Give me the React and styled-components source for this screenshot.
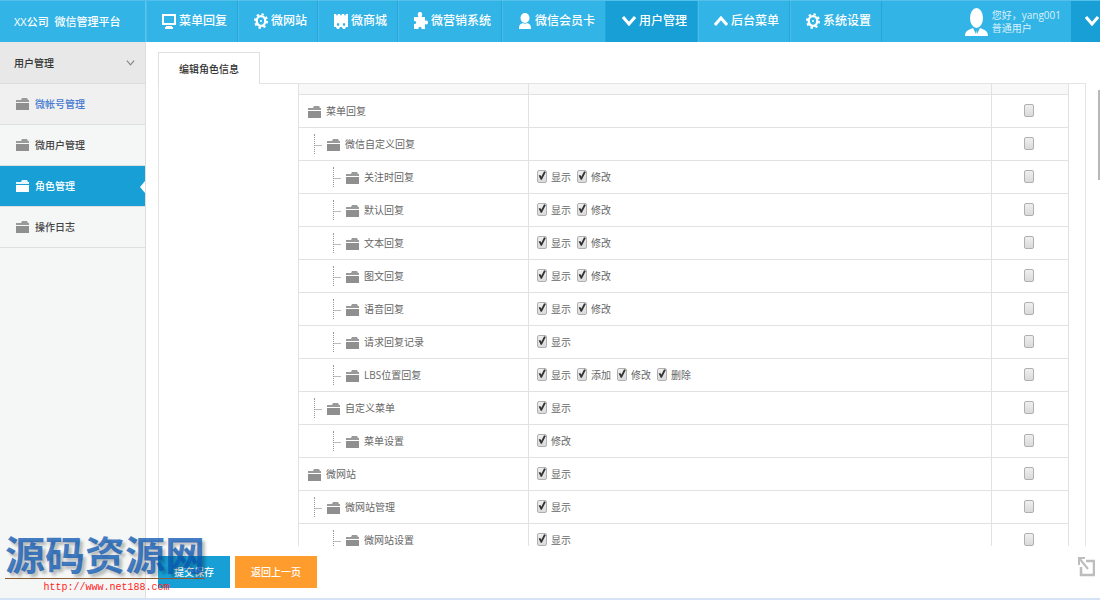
import React from 'react';
import styled, { createGlobalStyle, css } from 'styled-components';

const GlobalStyle = createGlobalStyle`
  * { box-sizing: border-box; }
  body {
    margin: 0;
    background: #fff;
    color: #666;
    font: 10px/14px "Open Sans", "Noto Sans CJK SC", sans-serif;
  }
  a { color: inherit; text-decoration: none; }
  button { font: inherit; border: 0; cursor: pointer; }
`;

const Page = styled.div`
  display: flex;
  flex-direction: column;
  height: 100vh;
  border-bottom: 2px solid #d5e3f5;
  position: relative;
  overflow: hidden;
`;

const Header = styled.header`
  display: flex;
  flex: none;
  height: 42px;
  background: #33b4e6;
  border-top: 1px solid #52c0ea;
  color: #fff;
`;

const Brand = styled.h1`
  width: 146px;
  margin: 0;
  padding: 2px 0 0 14px;
  border-right: 1px solid #5cc5ec;
  font-size: 11px;
  font-weight: 500;
  line-height: 38px;
  white-space: pre;
`;

const Nav = styled.nav`
  display: flex;
  flex: 1;
`;

const NavLink = styled.a`
  display: flex;
  align-items: center;
  gap: 3px;
  padding: 0 10px 2px 15px;
  border-right: 1px solid #25a5d8;
  border-left: 1px solid ${(p) => (p.$active ? '#179fd6' : '#48bcea')};
  background: ${(p) => (p.$active ? '#179fd6' : 'transparent')};
  font-size: 12px;
  font-weight: 500;
  white-space: nowrap;
`;

const User = styled.div`
  display: flex;
  align-items: center;
  gap: 4px;
  padding-right: 10px;
  color: #d9f2fc;
  line-height: 13px;
  white-space: nowrap;
`;

const UserToggle = styled.button`
  display: flex;
  align-items: center;
  width: 29px;
  padding: 0 0 2px 14px;
  background: #179fd6;
  overflow: hidden;
`;

const Body = styled.div`
  display: flex;
  flex: 1;
  min-height: 0;
`;

const Sidebar = styled.aside`
  width: 146px;
  flex: none;
  background: #f5f7f7;
  border-right: 1px solid #dedede;
`;

const SideTitle = styled.h2`
  display: flex;
  align-items: center;
  justify-content: space-between;
  height: 42px;
  margin: 0;
  padding: 0 10px 0 14px;
  background: #e8e8e8;
  border-bottom: 1px solid #dcdcdc;
  color: #333;
  font-size: 10px;
  font-weight: 500;
`;

const sideStates = {
  hover: css`background: #f0f0f0; color: #4479cf;`,
  active: css`background: #179fd6; color: #fff;`,
  plain: css`color: #444;`,
};

const SideLink = styled.a`
  display: flex;
  align-items: center;
  gap: 6px;
  height: 41px;
  padding-left: 16px;
  border-bottom: 1px solid #dfdfdf;
  position: relative;
  font-weight: 500;
  ${(p) => sideStates[p.$state]}
`;

const Pointer = styled.span`
  position: absolute;
  right: 0;
  top: 15px;
  border: 6px solid transparent;
  border-left-width: 0;
  border-right: 5px solid #fff;
`;

const Main = styled.main`
  display: flex;
  flex-direction: column;
  flex: 1;
  min-width: 0;
  padding: 10px 14px 10px 12px;
`;

const Tab = styled.button`
  align-self: flex-start;
  flex: none;
  height: 32px;
  margin-bottom: -1px;
  padding: 0 20px;
  border: 1px solid #e0e0e0;
  border-bottom: 0;
  background: #fff;
  color: #333;
  font-weight: 500;
  position: relative;
`;

const Panel = styled.section`
  flex: 1;
  min-height: 0;
  overflow: hidden;
  padding: 0 16px 0 139px;
  border: 1px solid #e4e4e4;
  border-bottom: 0;
`;

const Table = styled.table`
  width: 100%;
  table-layout: fixed;
  border-spacing: 0;
  border-right: 1px solid #e2e2e2;
`;

const HeadCell = styled.th`
  width: ${(p) => p.$width || 'auto'};
  height: 11px;
  padding: 0;
  background: #f8f8f8;
  border-left: 1px solid #e2e2e2;
  border-bottom: 1px solid #e2e2e2;
`;

const Cell = styled.td`
  height: 33px;
  padding: ${(p) => (p.$center ? '0 2px 0 0' : '0 0 0 8px')};
  text-align: ${(p) => (p.$center ? 'center' : 'left')};
  border-left: 1px solid #e2e2e2;
  border-bottom: 1px solid #e2e2e2;
`;

const indents = [1, 7, 26];

const Name = styled.div`
  display: flex;
  align-items: center;
  gap: 5px;
  padding-left: ${(p) => indents[p.$level]}px;
`;

const Branch = styled.span`
  width: 8px;
  height: 20px;
  border-left: 1px dotted #999;
  background: linear-gradient(#bbb, #bbb) 0 11px / 8px 1px no-repeat;
`;

const FolderBox = styled.span`
  display: flex;
  padding-top: ${(p) => (p.$low ? '2px' : '0')};
  color: ${(p) => (p.$white ? '#fff' : '#8f8f8f')};
`;

const Options = styled.div`
  display: flex;
  gap: 6px;
`;

const Option = styled.label`
  display: flex;
  align-items: center;
  gap: 4px;
`;

const Check = styled.input`
  appearance: none;
  width: 10px;
  height: 13px;
  margin: 0 0 2px;
  vertical-align: middle;
  border: 1px solid #b0b0b0;
  border-radius: 2px;
  background: linear-gradient(#efefef, #dadada);
  &:checked::before {
    content: '';
    display: block;
    width: 8px;
    height: 10px;
    background: #333;
    clip-path: polygon(8% 50%, 28% 44%, 42% 62%, 76% 8%, 98% 16%, 48% 92%, 34% 92%);
  }
`;

const Footer = styled.footer`
  display: flex;
  flex: none;
  gap: 5px;
  margin: 10px -9px 0 0;
`;

const Action = styled.button`
  height: 32px;
  padding: 0 16px;
  background: ${(p) => (p.$primary ? '#179fd6' : '#ff9c2e')};
  color: #fff;
  font-weight: 500;
`;

const Expand = styled.button`
  margin-left: auto;
  padding: 0;
  height: 22px;
  background: none;
`;

const ScrollThumb = styled.div`
  position: absolute;
  top: 90px;
  right: 0;
  width: 2px;
  height: 90px;
  background: #b8b8b8;
`;

const SiteMark = styled.div`
  position: absolute;
  left: 5px;
  bottom: 1px;
  width: 200px;
  text-align: center;
  pointer-events: none;
`;

const SiteName = styled.div`
  height: 49px;
  border-bottom: 1px solid #8a5a33;
  color: rgba(8, 84, 176, 0.75);
  font: 700 40px/46px "Noto Sans CJK SC", sans-serif;
  text-shadow: 3px 3px 3px rgba(0, 0, 0, 0.25);
  white-space: nowrap;
`;

const SiteUrl = styled.div`
  color: #f22;
  font: 10px/18px "Liberation Mono", monospace;
  padding-left: 3px;
`;

const Folder = ({ low, white }) => (
  <FolderBox $low={low} $white={white}>
    <svg width="13" height="12" viewBox="0 0 13 12" fill="currentColor">
      <path d="M0 4V2h5l1-2h5l1 2h1v2z" opacity=".9" />
      <path d="M0 5h13v7H0z" />
    </svg>
  </FolderBox>
);

const Chevron = ({ up, width = 14, color = '#fff', stroke = 3 }) => (
  <svg width={width} height={Math.round(width * 0.7)} viewBox="0 0 14 10" fill="none" stroke={color} strokeWidth={stroke}>
    <path d={up ? 'M1 9l6-7 6 7' : 'M1 1l6 7 6-7'} />
  </svg>
);

const Gear = () => (
  <svg width="14" height="16" viewBox="0 0 14 16" fill="none" stroke="#fff">
    <ellipse cx="7" cy="8" rx="4.3" ry="4.9" strokeWidth="2.4" />
    <ellipse cx="7" cy="8" rx="6" ry="6.9" strokeWidth="2" strokeDasharray="2.4 2.68" />
    <circle cx="7" cy="8" r="1" fill="#fff" stroke="none" />
  </svg>
);

const icons = {
  monitor: (
    <svg width="14" height="16" viewBox="0 0 14 16" fill="#fff">
      <path fillRule="evenodd" d="M0 1h14v11H0zM2 3v7h10V3zM4 13h6v1h1v2H3v-2h1z" />
    </svg>
  ),
  gear: <Gear />,
  shop: (
    <svg width="14" height="16" viewBox="0 0 14 16" fill="#fff">
      <path fillRule="evenodd" d="M0 1h2l1 2 1-2h2l1 2 1-2h2l1 2 1-2h2v13h-2l-1 2h-2l-1-2H6l-1 2H3l-1-2H0zM4 10a1.200 1.500 0 1 0 .1 0zM10 10a1.200 1.500 0 1 0 .1 0z" />
    </svg>
  ),
  puzzle: (
    <svg width="14" height="17" viewBox="0 0 14 17" fill="#fff">
      <path d="M0 5h4.500C3 2 4 0 6 0s3 2 1.500 5H11v4c1-1 3-.5 3 1.500S12 13 11 12v5H7.500C8 14 4 14 4.500 17H0v-5c3 .5 3-3.500 0-3z" />
    </svg>
  ),
  person: (
    <svg width="14" height="16" viewBox="0 0 14 16" fill="#fff">
      <ellipse cx="7" cy="5" rx="4.500" ry="5" />
      <path d="M1 16c0-4 1-5 4-6 1 1 3 1 4 0 3 1 4 2 4 6z" />
    </svg>
  ),
  down: <Chevron />,
  up: <Chevron up />,
};

const navItems = [
  ['monitor', '菜单回复'],
  ['gear', '微网站'],
  ['shop', '微商城'],
  ['puzzle', '微营销系统'],
  ['person', '微信会员卡'],
  ['down', '用户管理'],
  ['up', '后台菜单'],
  ['gear', '系统设置'],
];

const sideItems = [
  ['微帐号管理', 'hover'],
  ['微用户管理', 'plain'],
  ['角色管理', 'active'],
  ['操作日志', 'plain'],
];

const rows = [
  [0, '菜单回复', []],
  [1, '微信自定义回复', []],
  [2, '关注时回复', ['显示', '修改']],
  [2, '默认回复', ['显示', '修改']],
  [2, '文本回复', ['显示', '修改']],
  [2, '图文回复', ['显示', '修改']],
  [2, '语音回复', ['显示', '修改']],
  [2, '请求回复记录', ['显示']],
  [2, 'LBS位置回复', ['显示', '添加', '修改', '删除']],
  [1, '自定义菜单', ['显示']],
  [2, '菜单设置', ['修改']],
  [0, '微网站', ['显示']],
  [1, '微网站管理', ['显示']],
  [2, '微网站设置', ['显示']],
];

export default function App() {
  return (
    <Page>
      <GlobalStyle />
      <Header>
        <Brand>{'XX公司  微信管理平台'}</Brand>
        <Nav>
          {navItems.map(([icon, text]) => (
            <NavLink key={text} href="#" $active={text === '用户管理'}>
              {icons[icon]}
              {text}
            </NavLink>
          ))}
        </Nav>
        <User>
          <svg width="23" height="28" viewBox="0 0 23 28" fill="#fff">
            <ellipse cx="11.500" cy="10" rx="6.500" ry="10" />
            <path d="M0 28c0-5 3-6 8-8l3 6 .5-4 .5 4 3-6c5 2 8 3 8 8z" />
          </svg>
          <div>
            <div>您好，yang001</div>
            <div>普通用户</div>
          </div>
        </User>
        <UserToggle aria-label="展开">
          <Chevron />
        </UserToggle>
      </Header>
      <Body>
        <Sidebar>
          <SideTitle>
            用户管理
            <Chevron width={9} color="#888" stroke={2} />
          </SideTitle>
          {sideItems.map(([text, state]) => (
            <SideLink key={text} href="#" $state={state}>
              <Folder white={state === 'active'} />
              {text}
              {state === 'active' && <Pointer />}
            </SideLink>
          ))}
        </Sidebar>
        <Main>
          <Tab>编辑角色信息</Tab>
          <Panel>
            <Table>
              <thead>
                <tr>
                  <HeadCell $width="230px" />
                  <HeadCell />
                  <HeadCell $width="77px" />
                </tr>
              </thead>
              <tbody>
                {rows.map(([level, name, options]) => (
                  <tr key={name}>
                    <Cell>
                      <Name $level={level}>
                        {level > 0 && <Branch />}
                        <Folder low />
                        {name}
                      </Name>
                    </Cell>
                    <Cell>
                      <Options>
                        {options.map((option) => (
                          <Option key={option}>
                            <Check type="checkbox" defaultChecked />
                            {option}
                          </Option>
                        ))}
                      </Options>
                    </Cell>
                    <Cell $center>
                      <Check type="checkbox" aria-label={name} />
                    </Cell>
                  </tr>
                ))}
              </tbody>
            </Table>
          </Panel>
          <Footer>
            <Action $primary>提交保存</Action>
            <Action>返回上一页</Action>
            <Expand aria-label="全屏">
              <svg width="17" height="21" viewBox="0 0 17 21" fill="none" stroke="#bdbdbd" strokeWidth="2">
                <path d="M8 5h8v14H3v-8" strokeWidth="2.500" />
                <path d="M1 9V2h6M1 2l9 11" />
              </svg>
            </Expand>
          </Footer>
        </Main>
      </Body>
      <ScrollThumb />
      <SiteMark>
        <SiteName>源码资源网</SiteName>
        <SiteUrl>http://www.net188.com</SiteUrl>
      </SiteMark>
    </Page>
  );
}
